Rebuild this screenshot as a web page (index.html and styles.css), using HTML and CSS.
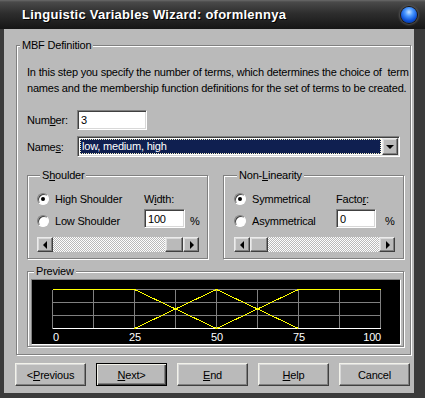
FILE: index.html
```html
<!DOCTYPE html>
<html>
<head>
<meta charset="utf-8">
<title>Linguistic Variables Wizard</title>
<link rel="stylesheet" href="styles.css">
</head>
<body>
<div class="window">
  <div class="titlebar">
    <span class="title">Linguistic Variables Wizard: oformlennya</span>
    <span class="orb"></span>
  </div>

  <div class="client">
    <fieldset class="group mbf">
      <legend>MBF Definition</legend>

      <p class="intro">In this step you specify the number of terms, which determines the choice of&nbsp; term<br>names and the membership function definitions for the set of terms to be created.</p>

      <div class="row num-row">
        <label>Num<u>b</u>er:</label>
        <div class="edit num">3</div>
      </div>

      <div class="row names-row">
        <label>Name<u>s</u>:</label>
        <div class="combo">
          <span class="combo-sel">low, medium, high</span>
          <span class="drop-btn"><span class="tri-down"></span></span>
        </div>
      </div>

      <div class="pair">
        <fieldset class="group sub shoulder">
          <legend>S<u>h</u>oulder</legend>
          <div class="opts">
            <div class="radio"><span class="dot on"></span>High Shoulder</div>
            <div class="amount-label">W<u>i</u>dth:</div>
            <div class="radio"><span class="dot"></span>Low Shoulder</div>
            <div class="edit amount">100</div>
            <div class="unit">%</div>
          </div>
          <div class="scrollbar at-max">
            <span class="sb-btn"><span class="tri-left"></span></span>
            <span class="sb-track"><span class="sb-thumb"></span></span>
            <span class="sb-btn"><span class="tri-right"></span></span>
          </div>
        </fieldset>

        <fieldset class="group sub nonlin">
          <legend>Non-<u>L</u>inearity</legend>
          <div class="opts">
            <div class="radio"><span class="dot on"></span>Symmetrical</div>
            <div class="amount-label">Facto<u>r</u>:</div>
            <div class="radio"><span class="dot"></span>Asymmetrical</div>
            <div class="edit amount">0</div>
            <div class="unit">%</div>
          </div>
          <div class="scrollbar at-min">
            <span class="sb-btn"><span class="tri-left"></span></span>
            <span class="sb-track"><span class="sb-thumb"></span></span>
            <span class="sb-btn"><span class="tri-right"></span></span>
          </div>
        </fieldset>
      </div>

      <fieldset class="group preview">
        <legend>Preview</legend>
        <div class="canvas">
          <svg width="368" height="64" viewBox="0 0 368 64" shape-rendering="crispEdges">
            <g stroke="#808080" stroke-width="1">
              <line x1="20.5" y1="9.5" x2="348.5" y2="9.5"/>
              <line x1="20.5" y1="22.5" x2="348.5" y2="22.5"/>
              <line x1="20.5" y1="35.5" x2="348.5" y2="35.5"/>
              <line x1="20.5" y1="9.5" x2="20.5" y2="48.5"/>
              <line x1="61.5" y1="9.5" x2="61.5" y2="48.5"/>
              <line x1="102.5" y1="9.5" x2="102.5" y2="48.5"/>
              <line x1="143.5" y1="9.5" x2="143.5" y2="48.5"/>
              <line x1="184.5" y1="9.5" x2="184.5" y2="48.5"/>
              <line x1="225.5" y1="9.5" x2="225.5" y2="48.5"/>
              <line x1="266.5" y1="9.5" x2="266.5" y2="48.5"/>
              <line x1="307.5" y1="9.5" x2="307.5" y2="48.5"/>
              <line x1="348.5" y1="9.5" x2="348.5" y2="48.5"/>
            </g>
            <line x1="20.5" y1="48.5" x2="348.5" y2="48.5" stroke="#ffffff"/>
            <g stroke="#ffff00" fill="none">
              <polyline points="20.5,9.5 102.5,9.5 184.5,48.5"/>
              <polyline points="102.5,48.5 184.5,9.5 266.5,48.5"/>
              <polyline points="184.5,48.5 266.5,9.5 348.5,9.5"/>
            </g>
            <g class="axis" fill="#ffffff">
              <text x="21" y="61">0</text>
              <text x="103" y="61" text-anchor="middle">25</text>
              <text x="185" y="61" text-anchor="middle">50</text>
              <text x="267" y="61" text-anchor="middle">75</text>
              <text x="349" y="61" text-anchor="end">100</text>
            </g>
          </svg>
        </div>
      </fieldset>
    </fieldset>

    <div class="buttons">
      <button class="btn">&lt;<u>P</u>revious</button>
      <button class="btn default"><u>N</u>ext&gt;</button>
      <button class="btn"><u>E</u>nd</button>
      <button class="btn"><u>H</u>elp</button>
      <button class="btn">Cancel</button>
    </div>
  </div>
</div>
</body>
</html>
```

FILE: styles.css
```css
body {
   margin: 0;
   background-color: #2b2b2b;
   font-family: "Liberation Sans", Arial, sans-serif;
   font-size: 11px;
   letter-spacing: -0.2px;
   color: #000;
}

.window {
   width: 425px;
   height: 398px;
   display: flex;
   flex-direction: column;
   background-color: #3b3b3b;
}

/* title bar */

.titlebar {
   height: 29px;
   flex: none;
   display: flex;
   align-items: center;
   padding: 0 8px 0 22px;
   background: linear-gradient(#6a6a6a 0, #4a4a4a 2px, #2e2e2e 45%, #161616 100%);
}

.title {
   color: #fff;
   font-weight: bold;
   font-size: 13px;
   letter-spacing: 0.25px;
   text-shadow: 1px 1px 0 #000;
}

.orb {
   margin-left: auto;
   width: 16px;
   height: 16px;
   border-radius: 50%;
   background: radial-gradient(circle at 50% 32%, #c4e2ff 0, #4a98ff 30%, #0b4fd6 65%, #062a78 100%);
   box-shadow: 0 0 0 1px #151515, 0 0 2px 2px #555;
}

/* client area */

.client {
   flex: 1;
   margin: 0 11px 5px 4px;
   padding-top: 10px;
   background-color: #bababa;
}

.group {
   margin: 0;
   padding: 0;
   min-width: 0;
   box-sizing: border-box;
   border: 1px solid #808080;
   box-shadow: inset 1px 1px 0 #fff, 1px 1px 0 #fff;
}

.group legend {
   margin-left: 3px;
   padding: 0 2px;
   line-height: 13px;
   background-color: #bababa;
}

.mbf {
   width: 395px;
   margin-left: 12px;
}

.intro {
   margin: 12px 0 0 10px;
   line-height: 16px;
   white-space: nowrap;
}

.row {
   display: flex;
   align-items: center;
   margin-left: 10px;
}

.row label {
   width: 50px;
}

.num-row {
   margin-top: 14px;
}

.names-row {
   margin-top: 6px;
}

/* sunken edit boxes */

.edit {
   box-sizing: border-box;
   height: 20px;
   background-color: #fff;
   border: 1px solid;
   border-color: #808080 #fff #fff #808080;
   box-shadow: inset 1px 1px 0 #404040, inset -1px -1px 0 #d8d8d8;
   padding: 2px 0 0 3px;
   line-height: 15px;
}

.num {
   width: 70px;
}

.combo {
   box-sizing: border-box;
   width: 323px;
   height: 21px;
   display: flex;
   padding: 1px;
   background-color: #fff;
   border: 1px solid;
   border-color: #808080 #fff #fff #808080;
   box-shadow: inset 1px 1px 0 #404040, inset -1px -1px 0 #d8d8d8;
}

.combo-sel {
   flex: 1;
   margin: 1px;
   border: 1px dotted #f4f0c4;
   background-color: #0f1f50;
   color: #fff;
   line-height: 13px;
   padding-left: 1px;
}

.drop-btn,
.sb-btn,
.sb-thumb {
   box-sizing: border-box;
   display: flex;
   align-items: center;
   justify-content: center;
   background-color: #bababa;
   border: 1px solid;
   border-color: #ececec #404040 #404040 #ececec;
   box-shadow: inset -1px -1px 0 #808080, inset 1px 1px 0 #dadada;
}

.drop-btn {
   width: 16px;
}

.tri-down {
   border-left: 4px solid transparent;
   border-right: 4px solid transparent;
   border-top: 4px solid #000;
}

.tri-left {
   border-top: 4px solid transparent;
   border-bottom: 4px solid transparent;
   border-right: 4px solid #000;
   margin-right: 1px;
}

.tri-right {
   border-top: 4px solid transparent;
   border-bottom: 4px solid transparent;
   border-left: 4px solid #000;
   margin-left: 1px;
}

/* shoulder / non-linearity */

.pair {
   display: grid;
   grid-template-columns: 181px 181px;
   column-gap: 15px;
   margin: 12px 0 0 10px;
}

.sub {
   padding: 0 8px 6px 9px;
}

.nonlin {
   padding-left: 10px;
}

.opts {
   display: grid;
   grid-template-columns: 107px 41px 1fr;
   grid-template-rows: 22px 22px;
   align-items: center;
   margin-top: 6px;
}

.nonlin .opts {
   grid-template-columns: 102px 40px 1fr;
}

.amount-label {
   grid-column: 2 / 4;
}

.amount {
   align-self: start;
   height: 19px;
   margin-top: -1px;
   line-height: 14px;
}

.unit {
   margin-left: 5px;
}

.nonlin .unit {
   margin-left: 9px;
}

.radio {
   display: flex;
   align-items: center;
   gap: 6px;
}

.dot {
   box-sizing: border-box;
   width: 12px;
   height: 12px;
   border-radius: 50%;
   background-color: #fff;
   border: 1px solid;
   border-color: #808080 #fff #fff #808080;
   box-shadow: inset 1px 1px 0 #404040;
   display: flex;
   align-items: center;
   justify-content: center;
}

.dot.on::after {
   content: "";
   width: 4px;
   height: 4px;
   border-radius: 50%;
   background-color: #000;
}

.scrollbar {
   display: flex;
   height: 15px;
   margin-top: 5px;
}

.sb-btn {
   width: 16px;
   flex: none;
}

.sb-track {
   flex: 1;
   display: flex;
   background: repeating-conic-gradient(#ffffff 0 25%, #bababa 0 50%) 0 0 / 2px 2px;
}

.at-max .sb-track {
   justify-content: flex-end;
}

.sb-thumb {
   width: 18px;
}

/* preview */

.preview {
   width: 377px;
   margin: 6px 0 7px 10px;
   padding: 1px 2px 1px 3px;
}

.canvas {
   width: 370px;
   height: 66px;
   box-sizing: border-box;
   background-color: #000;
   border: 1px solid;
   border-color: #808080 #fff #fff #808080;
}

.canvas svg {
   display: block;
}

.axis text {
   font-family: "Liberation Sans", Arial, sans-serif;
   font-size: 11px;
}

/* dialog buttons */

.buttons {
   display: flex;
   gap: 10px;
   margin: 8px 0 0 11px;
}

.btn {
   width: 71px;
   height: 23px;
   padding: 0;
   font: inherit;
   letter-spacing: inherit;
   color: #000;
   background-color: #bababa;
   border: 1px solid;
   border-color: #f2f2ea #404040 #404040 #f2f2ea;
   box-shadow: inset -1px -1px 0 #808080, inset 1px 1px 0 #d8d8d8;
}

.btn.default {
   border-color: #000;
   box-shadow: inset 1px 1px 0 #f2f2ea, inset -1px -1px 0 #404040, inset -2px -2px 0 #808080;
}
```
